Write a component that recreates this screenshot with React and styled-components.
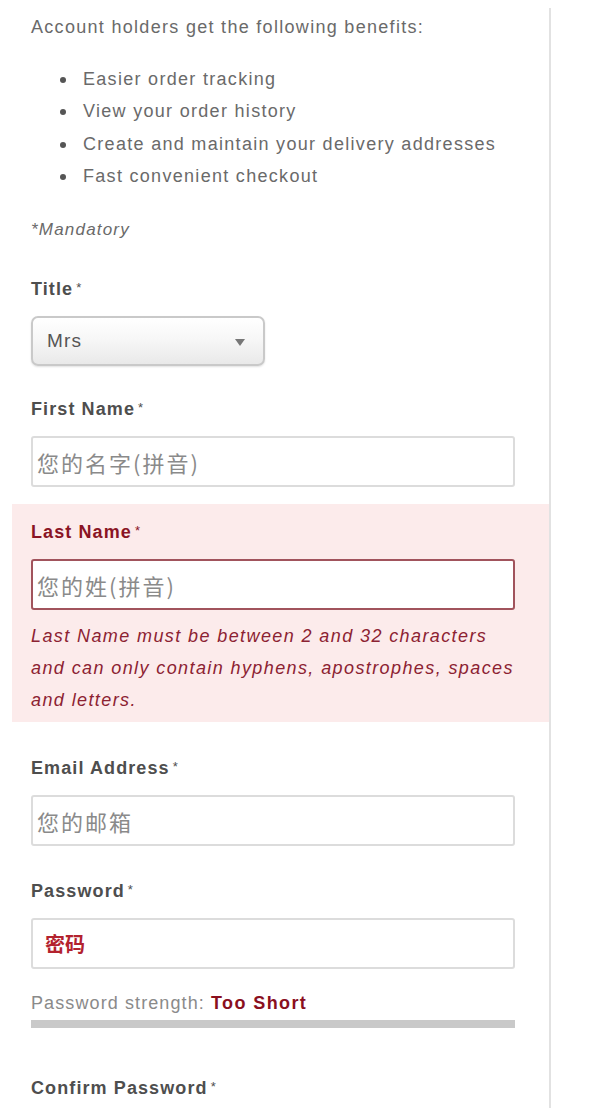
import React from 'react'
import styled, { createGlobalStyle } from 'styled-components'

const GlobalStyle = createGlobalStyle`
  html, body {
    margin: 0;
    padding: 0;
    background: #ffffff;
  }
  body {
    font-family: "Liberation Sans", Arial, "Noto Sans CJK SC", sans-serif;
    color: #666666;
  }
`

export const Page = styled.div`
  padding-top: 8px;
  padding-left: 12px;
  min-height: 1100px;
  display: flex;
`

export const Column = styled.div`
  width: 537px;
  min-height: 1100px;
  border-right: 2px solid #e2e2e2;
  box-sizing: content-box;
  padding-top: 7px;
`

export const Section = styled.div`
  padding-left: 19px;
`

export const Intro = styled.p`
  margin: 0;
  font-size: 18px;
  line-height: 24px;
  color: #6a6a6a;
  letter-spacing: 1.3px;
`

export const Benefits = styled.ul`
  list-style: none;
  margin: 24px 0 0;
  padding: 0 0 0 52px;
`

export const Benefit = styled.li`
  position: relative;
  font-size: 18px;
  line-height: 32.3px;
  color: #6a6a6a;
  letter-spacing: 1.3px;
  &::before {
    content: '';
    position: absolute;
    left: -23px;
    top: 14px;
    width: 6px;
    height: 6px;
    border-radius: 50%;
    background: #555555;
  }
`

export const Mandatory = styled.p`
  margin: 26px 0 34px;
  font-size: 17px;
  line-height: 24px;
  font-style: italic;
  color: #6a6a6a;
  letter-spacing: 1.2px;
`

export const Field = styled.div`
  padding: 0 0 0 19px;
  margin-bottom: ${p => p.$gap ?? 30}px;
`

export const ErrorField = styled.div`
  background: #fcebeb;
  padding: 15px 0 6px 19px;
  margin-bottom: 33px;
`

export const Label = styled.div`
  font-size: 18px;
  line-height: 24px;
  font-weight: bold;
  color: ${p => (p.$error ? '#8a1424' : '#4e4e4e')};
  letter-spacing: 1.1px;
  margin-bottom: 15px;
`

export const Star = styled.span`
  font-weight: normal;
  font-size: 13px;
  vertical-align: 3px;
  margin-left: 3px;
`

export const Select = styled.div`
  width: 234px;
  height: 50px;
  box-sizing: border-box;
  border: 2px solid #c9c9c9;
  border-radius: 7px;
  background: linear-gradient(#ffffff, #f7f7f7 45%, #e9e9e9);
  box-shadow: 0 1px 2px rgba(0, 0, 0, 0.12);
  display: flex;
  align-items: center;
  justify-content: space-between;
  padding: 0 18px 0 14px;
  font-size: 19px;
  letter-spacing: 1.2px;
  color: #555555;
`

export const Caret = styled.span`
  width: 0;
  height: 0;
  border-left: 5px solid transparent;
  border-right: 5px solid transparent;
  border-top: 7px solid #777777;
  margin-top: 2px;
`

export const Input = styled.div`
  width: 484px;
  height: 51px;
  box-sizing: border-box;
  border: 2px solid ${p => (p.$error ? '#a1535c' : '#dcdcdc')};
  border-radius: 3px;
  background: #ffffff;
  display: flex;
  align-items: center;
  padding-left: ${p => (p.$indent ? 12 : 4)}px;
  font-family: "Noto Sans CJK SC", "Liberation Sans", sans-serif;
  font-size: ${p => (p.$filled ? 20 : 22)}px;
  letter-spacing: ${p => (p.$filled ? 0 : 2)}px;
  color: ${p => (p.$filled ? '#b3222e' : '#8a8a8a')};
  font-weight: ${p => (p.$filled ? 'bold' : 'normal')};
`

export const ErrorText = styled.p`
  margin: 10px 0 0;
  font-size: 18px;
  line-height: 32px;
  font-style: italic;
  color: #8c2232;
  letter-spacing: 1.4px;
`

export const Strength = styled.div`
  margin-top: 22px;
  font-size: 18px;
  line-height: 24px;
  color: #8a8a8a;
  letter-spacing: 1.1px;
`

export const StrengthValue = styled.span`
  font-weight: bold;
  color: #8a0f1e;
  letter-spacing: 1.4px;
`

export const StrengthBar = styled.div`
  width: 484px;
  height: 8px;
  margin-top: 5px;
  background: #c9c9c9;
`

const benefits = [
  'Easier order tracking',
  'View your order history',
  'Create and maintain your delivery addresses',
  'Fast convenient checkout',
]

export default function App() {
  return (
    <Page>
      <GlobalStyle />
      <Column>
        <Section>
          <Intro>Account holders get the following benefits:</Intro>
          <Benefits>
            {benefits.map(b => (
              <Benefit key={b}>{b}</Benefit>
            ))}
          </Benefits>
          <Mandatory>*Mandatory</Mandatory>
        </Section>

        <Field>
          <Label>Title<Star>*</Star></Label>
          <Select>
            Mrs
            <Caret />
          </Select>
        </Field>

        <Field $gap={17}>
          <Label>First Name<Star>*</Star></Label>
          <Input>您的名字(拼音)</Input>
        </Field>

        <ErrorField>
          <Label $error>Last Name<Star>*</Star></Label>
          <Input $error>您的姓(拼音)</Input>
          <ErrorText>
            Last Name must be between 2 and 32 characters
            <br />
            and can only contain hyphens, apostrophes, spaces
            <br />
            and letters.
          </ErrorText>
        </ErrorField>

        <Field $gap={32}>
          <Label>Email Address<Star>*</Star></Label>
          <Input>您的邮箱</Input>
        </Field>

        <Field $gap={47}>
          <Label>Password<Star>*</Star></Label>
          <Input $filled $indent>密码</Input>
          <Strength>
            Password strength: <StrengthValue>Too Short</StrengthValue>
          </Strength>
          <StrengthBar />
        </Field>

        <Field>
          <Label>Confirm Password<Star>*</Star></Label>
        </Field>
      </Column>
    </Page>
  )
}
